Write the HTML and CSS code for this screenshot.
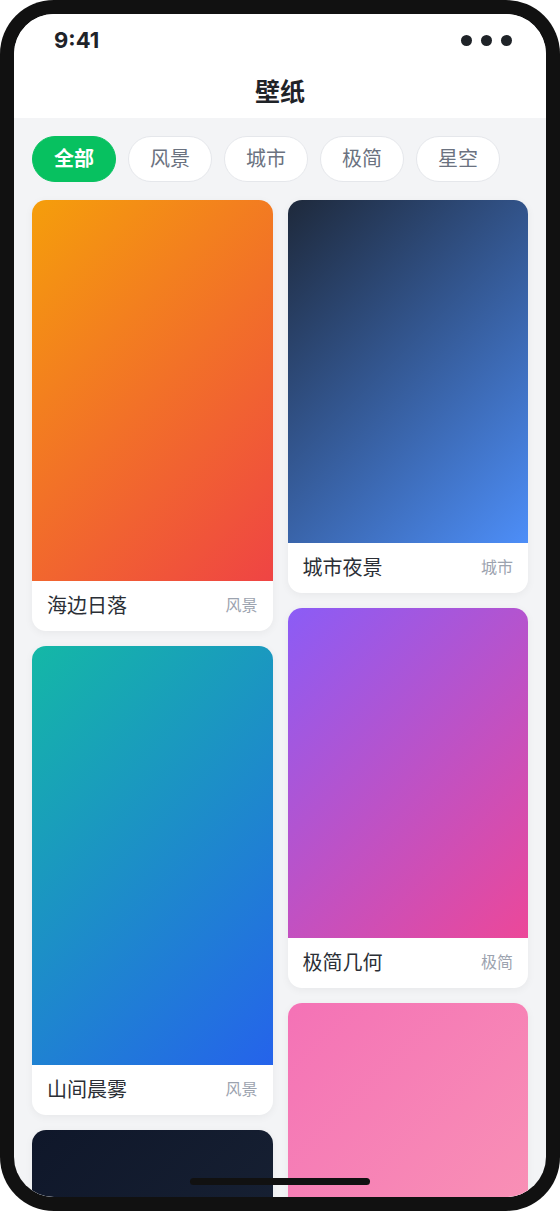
FILE: index.html
```html
<!DOCTYPE html>
<html lang="zh-CN">
<head>
  <meta charset="UTF-8" />
  <title>壁纸</title>
  <meta name="viewport" content="width=device-width, initial-scale=1.0" />
  <link rel="stylesheet" href="styles.css">
</head>
<body>

  <div class="phone">
    <div class="screen">

      <!-- status bar -->
      <div class="status">
        <span class="time">9:41</span>
        <div class="dots"><i></i><i></i><i></i></div>
      </div>

      <!-- nav -->
      <div class="nav">壁纸</div>

      <!-- category tabs -->
      <div class="tabs">
        <span class="tab active">全部</span>
        <span class="tab">风景</span>
        <span class="tab">城市</span>
        <span class="tab">极简</span>
        <span class="tab">星空</span>
      </div>

      <!-- wallpaper grid -->
      <div class="grid">
        <div class="col">
          <div class="card">
            <div class="pic sunset" style="height: 381px"></div>
            <div class="caption"><span class="name">海边日落</span><span class="tag">风景</span></div>
          </div>
          <div class="card">
            <div class="pic mist" style="height: 419px"></div>
            <div class="caption"><span class="name">山间晨雾</span><span class="tag">风景</span></div>
          </div>
          <div class="card">
            <div class="pic stars" style="height: 420px"></div>
          </div>
        </div>
        <div class="col">
          <div class="card">
            <div class="pic city" style="height: 343px"></div>
            <div class="caption"><span class="name">城市夜景</span><span class="tag">城市</span></div>
          </div>
          <div class="card">
            <div class="pic geo" style="height: 330px"></div>
            <div class="caption"><span class="name">极简几何</span><span class="tag">极简</span></div>
          </div>
          <div class="card">
            <div class="pic blush" style="height: 420px"></div>
          </div>
        </div>
      </div>

      <div class="home-bar"></div>
    </div>
  </div>

</body>
</html>
```

FILE: styles.css
```css
body {
  margin: 0;
  background: #fff;
  font-family: "Noto Sans CJK SC", "Noto Sans", sans-serif;
}

.phone {
  width: 560px;
  height: 1211px;
  box-sizing: border-box;
  padding: 14px;
  background: #111;
  border-radius: 54px;
}

.screen {
  position: relative;
  height: 100%;
  background: #f3f4f6;
  border-radius: 40px;
  overflow: hidden;
}

.status {
  height: 52px;
  background: #fff;
  display: flex;
  align-items: center;
  justify-content: space-between;
  padding: 0 34px 0 40px;
}

.time {
  font-family: Inter, "Noto Sans", sans-serif;
  font-size: 22px;
  font-weight: 700;
  color: #1f2328;
  margin-top: -1px;
}

.dots {
  display: flex;
  gap: 9px;
}

.dots i {
  width: 11px;
  height: 11px;
  border-radius: 50%;
  background: #1f2328;
}

.nav {
  height: 52px;
  box-sizing: border-box;
  padding-bottom: 4px;
  background: #fff;
  display: flex;
  align-items: center;
  justify-content: center;
  font-size: 25px;
  font-weight: 700;
  color: #1f2328;
}

.tabs {
  display: flex;
  gap: 12px;
  padding: 18px 18px 0;
}

.tab {
  width: 84px;
  height: 46px;
  box-sizing: border-box;
  padding-bottom: 3px;
  display: flex;
  align-items: center;
  justify-content: center;
  background: #fff;
  border: 1px solid #e5e7eb;
  border-radius: 23px;
  font-size: 20px;
  color: #6b7280;
}

.tab.active {
  background: #07c160;
  border-color: #07c160;
  color: #fff;
  font-weight: 700;
}

.grid {
  display: flex;
  gap: 15px;
  padding: 18px 18px 0;
}

.col {
  flex: 1;
  display: flex;
  flex-direction: column;
  gap: 15px;
}

.card {
  background: #fff;
  border-radius: 14px;
  overflow: hidden;
  box-shadow: 0 2px 8px rgba(0, 0, 0, 0.05);
}

.caption {
  height: 50px;
  box-sizing: border-box;
  padding: 0 15px 4px;
  display: flex;
  align-items: center;
  justify-content: space-between;
}

.name {
  font-size: 20px;
  color: #2b2f36;
}

.tag {
  font-size: 16px;
  color: #9ca3af;
}

.sunset { background: linear-gradient(135deg, #f59e0b, #ef4444); }
.city   { background: linear-gradient(135deg, #1e293b, #4d8ef8); }
.mist   { background: linear-gradient(135deg, #14b8a6, #2563eb); }
.geo    { background: linear-gradient(135deg, #8b5cf6, #ec4899); }
.stars  { background: linear-gradient(135deg, #0f172a, #1e293b); }
.blush  { background: linear-gradient(135deg, #f472b6, #fb9fb5); }

.home-bar {
  position: absolute;
  left: 176px;
  bottom: 12px;
  width: 180px;
  height: 7px;
  border-radius: 4px;
  background: #111;
}
```
